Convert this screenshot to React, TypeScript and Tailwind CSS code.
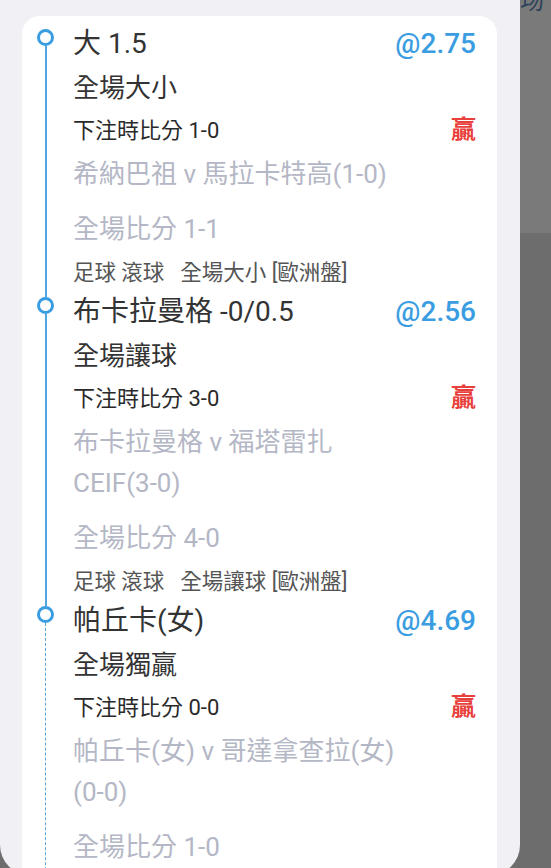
const font = "font-['Roboto','Noto_Sans_CJK_TC',sans-serif]";

type Bet = {
  pick: string;
  odds: string;
  market: string;
  score: string;
  match: string;
  matchTail: string;
  fullTime: string;
  sport: string;
  dashed?: boolean;
};

const bets: Bet[] = [
  {
    pick: "大 1.5",
    odds: "@2.75",
    market: "全場大小",
    score: "下注時比分 1-0",
    match: "希納巴祖 v 馬拉卡特高",
    matchTail: "(1-0)",
    fullTime: "全場比分 1-1",
    sport: "足球 滾球\u00a0\u00a0 全場大小 [歐洲盤]",
  },
  {
    pick: "布卡拉曼格 -0/0.5",
    odds: "@2.56",
    market: "全場讓球",
    score: "下注時比分 3-0",
    match: "布卡拉曼格 v 福塔雷扎 ",
    matchTail: "CEIF(3-0)",
    fullTime: "全場比分 4-0",
    sport: "足球 滾球\u00a0\u00a0 全場讓球 [歐洲盤]",
  },
  {
    pick: "帕丘卡(女)",
    odds: "@4.69",
    market: "全場獨贏",
    score: "下注時比分 0-0",
    match: "帕丘卡(女) v 哥達拿查拉(女)",
    matchTail: "(0-0)",
    fullTime: "全場比分 1-0",
    sport: "足球 滾球\u00a0\u00a0 全場獨贏 [歐洲盤]",
    dashed: true,
  },
];

function BetItem({ bet }: { bet: Bet }) {
  return (
    <div className="flex pb-[8px]">
      {/* timeline */}
      <div className="flex w-[17px] shrink-0 flex-col items-center">
        <div className="h-[17px] w-[17px] shrink-0 rounded-full border-[3px] border-[#3a9de2] bg-white" />
        {bet.dashed ? (
          <div className="-mb-[8px] flex-1 border-l border-dashed border-[#5aa3d9]" />
        ) : (
          <div className="-mb-[8px] w-[2px] flex-1 bg-[#4fa6e0]" />
        )}
      </div>
      <div className="ml-[19px] flex min-w-0 flex-1 flex-col pr-[21px]">
        <div className="-mt-[1px] flex h-[32px] items-center justify-between">
          <span className="text-[28px] text-[#333]">{bet.pick}</span>
          <span className="text-[28px] font-medium text-[#3b9de1]">{bet.odds}</span>
        </div>
        <div className="mt-[8px] text-[26px] leading-[40px] text-[#333]">{bet.market}</div>
        <div className="mt-[4px] flex h-[36px] items-center justify-between">
          <span className="text-[22px] text-[#2a2a2a]">{bet.score}</span>
          <span className="text-[25px] font-bold text-[#e8403c]">贏</span>
        </div>
        <div className="mt-[6px] max-w-[345px] text-[26px] leading-[41px] text-[#b4b7c5]">
          {bet.match}
          <span className="whitespace-nowrap">{bet.matchTail}</span>
        </div>
        <div className="mt-[14px] text-[26px] leading-[40px] text-[#b4b7c5]">{bet.fullTime}</div>
        <div className="mt-[8px] text-[21.5px] leading-[32px] text-[#555]">{bet.sport}</div>
      </div>
    </div>
  );
}

export default function App() {
  return (
    <div className={`flex h-[868px] w-[551px] overflow-hidden bg-[#6d6d6d] ${font}`}>
      <div className="h-[875px] w-[520px] shrink-0 rounded-b-[30px] bg-[#f0f0f5] pt-[16px]">
        <div className="ml-[22px] h-full w-[475px] rounded-t-[18px] bg-white pl-[15px] pt-[13px]">
          {bets.map((b) => (
            <BetItem key={b.odds} bet={b} />
          ))}
        </div>
      </div>
      <div className="flex flex-1 flex-col">
        <div className="h-[233px] overflow-hidden bg-[#7a7a7a]">
          <div className="-mt-[13px] text-[24px] leading-[28px] text-[#2c425a]">场</div>
        </div>
        <div className="flex-1" />
      </div>
    </div>
  );
}
